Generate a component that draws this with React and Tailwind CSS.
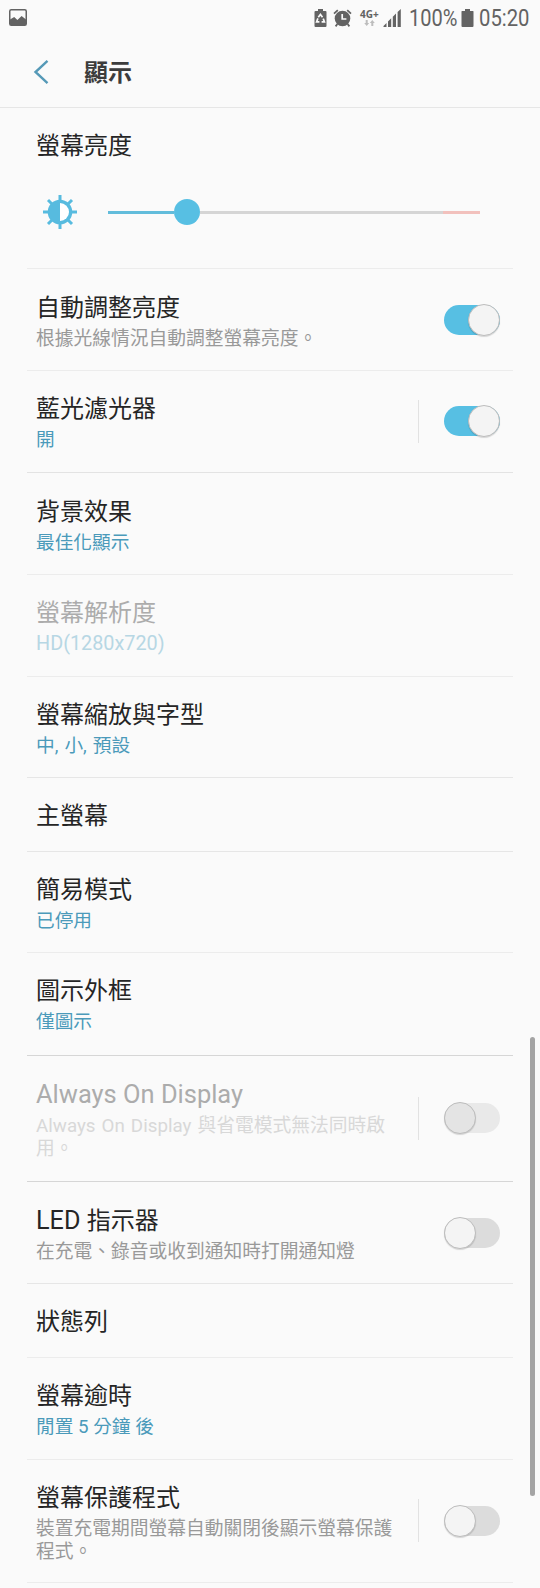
import React, { useState } from "react";
import clsx from "clsx";

// Rows of the display settings list, top to bottom
const settings = [
  {
    id: "auto",
    title: "自動調整亮度",
    desc: "根據光線情況自動調整螢幕亮度。",
    toggle: true,
    on: true,
    height: "h-[102px]",
    pad: "pt-[24px]",
  },
  {
    id: "bluelight",
    title: "藍光濾光器",
    value: "開",
    toggle: true,
    on: true,
    split: true,
    height: "h-[102px]",
    line: "border-[#e3e3e3]",
  },
  {
    id: "background",
    title: "背景效果",
    value: "最佳化顯示",
    height: "h-[102px]",
    pad: "pt-[24px]",
  },
  {
    id: "resolution",
    title: "螢幕解析度",
    value: <span className="text-[1.06em] leading-none">HD(1280x720)</span>,
    disabled: true,
    height: "h-[102px]",
  },
  {
    id: "zoom",
    title: "螢幕縮放與字型",
    value: <span className="[word-spacing:1.4px]">中, 小, 預設</span>,
    height: "h-[101px]",
    line: "border-[#e6e6e6]",
  },
  { id: "home", title: "主螢幕", height: "h-[74px]", line: "border-[#e6e6e6]" },
  { id: "easy", title: "簡易模式", value: "已停用", height: "h-[101px]" },
  {
    id: "frames",
    title: "圖示外框",
    value: "僅圖示",
    height: "h-[103px]",
    line: "border-[#d6d6d6]",
  },
  {
    id: "aod",
    title: <span className="text-[1.06em] leading-none">Always On Display</span>,
    desc: <span className="[word-spacing:1.4px]">Always On Display 與省電模式無法同時啟用。</span>,
    toggle: true,
    split: true,
    disabled: true,
    height: "h-[126px]",
    line: "border-[#d6d6d6]",
    pad: "pt-[24px]",
  },
  {
    id: "led",
    title: (
      <>
        <span className="text-[1.05em] leading-none">LED </span>
        指示器
      </>
    ),
    desc: "在充電、錄音或收到通知時打開通知燈",
    toggle: true,
    height: "h-[102px]",
    line: "border-[#e6e6e6]",
    pad: "pt-[24px]",
  },
  { id: "statusbar", title: "狀態列", height: "h-[74px]" },
  { id: "timeout", title: "螢幕逾時", value: "閒置 5 分鐘 後", height: "h-[102px]" },
  {
    id: "screensaver",
    title: "螢幕保護程式",
    desc: "裝置充電期間螢幕自動關閉後顯示螢幕保護程式。",
    toggle: true,
    split: true,
    height: "h-[123px]",
  },
];

const App = () => {
  const [switches, setSwitches] = useState(() =>
    Object.fromEntries(settings.map((s) => [s.id, Boolean(s.on)]))
  );

  const flip = (id) => setSwitches((prev) => ({ ...prev, [id]: !prev[id] }));

  return (
    <div
      lang="zh-Hant"
      className="relative w-[540px] h-[1588px] overflow-hidden bg-[#fafafa] font-[Roboto,'Noto_Sans_CJK_TC',sans-serif] text-[#252525]"
    >
      <StatusBar />

      <header className="flex items-center h-[72px] pl-[33px] border-b border-[#e6e6e6]">
        <button aria-label="返回" className="w-[18px] h-[26px]">
          <svg width="18" height="26" viewBox="0 0 18 26" fill="none" stroke="#5599b7" strokeWidth="2.4">
            <path d="M14.5 1.8 2.5 13l12 11.2" />
          </svg>
        </button>
        <h1 className="ml-[33px] pt-[3px] text-2xl leading-[30px] font-bold text-[#3c3c3c]">顯示</h1>
      </header>

      <main className="px-[27px]">
        <section className="h-[161px] px-[9px] pt-[23px] border-b border-[#ececec]">
          <h2 className="text-2xl leading-[30px]">螢幕亮度</h2>
          <div className="flex items-center mt-[33px] h-[36px] pl-[6px]">
            <BrightnessIcon />
            <BrightnessSlider />
          </div>
        </section>

        {settings.map((s) => (
          <SettingRow key={s.id} item={s} on={switches[s.id]} onToggle={() => flip(s.id)} />
        ))}
      </main>

      {/* scroll indicator */}
      <div className="absolute left-[530px] top-[1037px] w-[5px] h-[459px] rounded-full bg-[#a4a4a4]" />
    </div>
  );
};

/* ---------- Subcomponents ---------- */

const SettingRow = ({ item, on, onToggle }) => (
  <div className={clsx("flex items-stretch border-b pl-[9px]", item.height, item.line || "border-[#ececec]")}>
    <div className={clsx(item.pad || "pt-[23px]", item.toggle ? "w-[366px]" : "flex-1")}>
      <h2 className={clsx("h-[30px] text-2xl leading-[30px]", item.disabled && "text-[#acacac]")}>
        {item.title}
      </h2>
      {item.value && (
        <p
          className={clsx(
            "mt-[5px] text-[18.7px] leading-[22px]",
            item.disabled ? "text-[#b7d7e4]" : "text-[#4b9aba]"
          )}
        >
          {item.value}
        </p>
      )}
      {item.desc && (
        <p
          className={clsx(
            "mt-[5px] text-[18.75px] leading-[22.5px]",
            item.disabled ? "text-[#d8d8d8]" : "text-[#999]"
          )}
        >
          {item.desc}
        </p>
      )}
    </div>
    {item.toggle && (
      <div className={clsx("flex items-center", item.split && "pb-px")}>
        <div className={clsx("ml-[16px] mr-[25px] w-px h-[43px]", item.split && "bg-[#e2e2e2]")} />
        <Toggle on={on} disabled={item.disabled} onClick={onToggle} label={item.id} />
      </div>
    )}
  </div>
);

const Toggle = ({ on, disabled, onClick, label }) => (
  <button
    role="switch"
    aria-checked={on}
    aria-label={label}
    disabled={disabled}
    onClick={onClick}
    className={clsx(
      "flex items-center w-14 h-[30px] rounded-full",
      on ? "justify-end bg-[#57bfe3]" : disabled ? "bg-[#e9e9e9]" : "bg-[#dcdcdc]"
    )}
  >
    <span
      className={clsx(
        "size-8 shrink-0 rounded-full border border-[#bdbdbd] shadow-[0_1px_1px_rgba(0,0,0,0.15)]",
        disabled ? "bg-[#e4e4e4]" : "bg-[#f4f4f4]"
      )}
    />
  </button>
);

const BrightnessSlider = () => (
  <div className="flex items-center ml-[30px] h-[26px]">
    <div className="w-[66px] h-[3px] bg-[#62bcdb]" />
    <div className="size-[26px] rounded-full bg-[#57bfe3]" />
    <div className="w-[243px] h-[3px] bg-[#d5d5d5]" />
    <div className="w-[37px] h-[3px] bg-[#f2c1bd]" />
  </div>
);

const BrightnessIcon = () => (
  <svg width="36" height="36" viewBox="-18 -18 36 36">
    <g stroke="#57bbdf" strokeWidth="3">
      {[0, 45, 90, 135, 180, 225, 270, 315].map((deg) => (
        <path key={deg} d="M0-11v-6" transform={`rotate(${deg})`} />
      ))}
    </g>
    <circle r="12.3" fill="#57bbdf" />
    <path d="M0-9a9 9 0 0 1 0 18z" fill="#fff" />
  </svg>
);

const StatusBar = () => (
  <div className="flex items-center h-9 pl-[9px] text-[#636363]">
    <svg width="18" height="18" viewBox="0 0 18 18">
      <rect x="0.75" y="0.75" width="16.5" height="15.5" rx="1.5" fill="none" stroke="#636363" strokeWidth="1.5" />
      <path d="M1 10.5 5.2 8l3.2 3L12.6 7 17 10.5V16H1z" fill="#636363" />
    </svg>

    <svg className="ml-[287px]" width="13" height="18" viewBox="0 0 13 18">
      <path d="M4 0h5v2h2.5q1 0 1 1v14q0 1-1 1h-10q-1 0-1-1V3q0-1 1-1H4z" fill="#636363" />
      <g fill="none" stroke="#fafafa" strokeWidth="1.7">
        <path d="M4.3 8.2 6.4 5.4l2.1 2.8" />
        <path d="M9.2 9.6l1.2 3.2H7.6" />
        <path d="M5.4 12.8H2.6l1.3-3.4" />
      </g>
    </svg>

    <svg className="ml-[6px]" width="19" height="18" viewBox="0 0 19 18">
      <circle cx="9.5" cy="9.5" r="7.8" fill="#636363" />
      <path d="M1 4.6 4.8 1.2M18 4.6l-3.8-3.4M4.4 15l-1.8 2.4M14.6 15l1.8 2.4" stroke="#636363" strokeWidth="1.8" />
      <path d="M9.2 5v5h4.2" fill="none" stroke="#fafafa" strokeWidth="1.7" />
    </svg>

    <div className="ml-[8px] mb-[2px] w-[20px] h-[18px]">
      <div className="font-['Open_Sans'] text-[10px] leading-[12px] font-bold whitespace-nowrap">4G+</div>
      <svg className="ml-[4px]" width="11" height="6" viewBox="0 0 11 6" fill="#bdbdbd">
        <path d="M1.7 0h2v3h1.5L2.7 6 .2 3h1.5zM7.3 6h2V3h1.5L8.3 0 5.8 3h1.5z" />
      </svg>
    </div>

    <svg className="ml-[3px]" width="19" height="18" viewBox="0 0 19 18" fill="#636363">
      <path d="M.5 18v-1l3-3v4zM5 18v-5.5l3.2-3.2V18zM9.8 18V7.7L13 4.500V18zM14.600 18V2.900L17.800 0v18z" />
    </svg>

    <span className="ml-[7px] mt-[2px] w-[48px] text-[23px] leading-[30px] origin-left scale-x-[0.87]">100%</span>

    <svg className="ml-[4px]" width="13" height="18" viewBox="0 0 13 18">
      <path d="M4 0h5v2h3q.5 0 .5.5V17q0 1-1 1h-10q-1 0-1-1V2.5Q.5 2 1 2h3z" fill="#636363" />
    </svg>

    <span className="ml-[5px] mt-[2px] w-[50px] text-[23px] leading-[30px] origin-left scale-x-[0.88]">05:20</span>
  </div>
);

export default App;
